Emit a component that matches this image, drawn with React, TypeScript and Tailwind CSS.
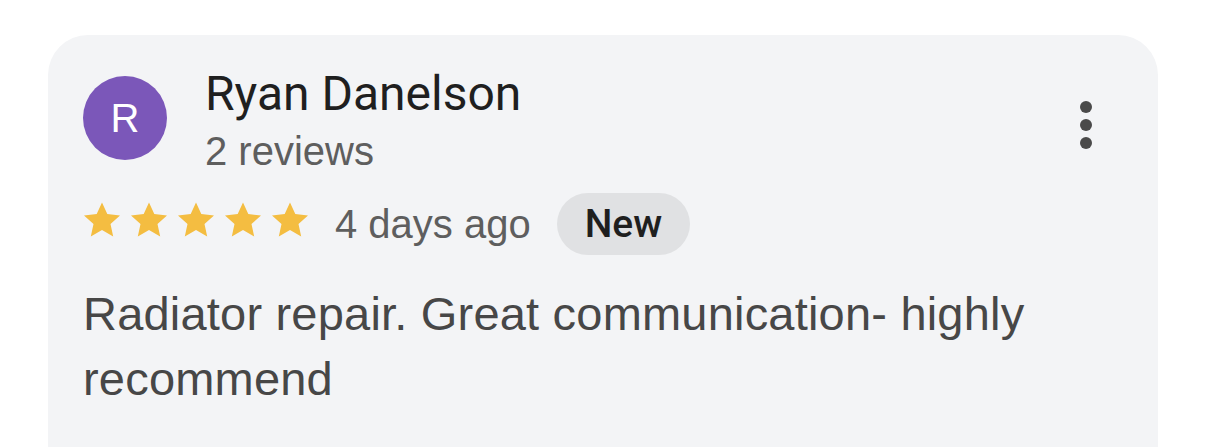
import React from "react";

const Star = () => (
  <svg width="38" height="36" viewBox="0 0 38 36" className="shrink-0">
    <path d="M19 0.5l5.3 11.6 12.7 1.3-9.5 8.6 2.7 12.5L19 28.1 7.8 34.5l2.7-12.5L1 13.4l12.7-1.3z" fill="#f4bd41" />
  </svg>
);

export default function App() {
  return (
    <div className="w-[1206px] h-[447px] bg-white overflow-hidden" style={{ fontFamily: "'Liberation Sans', Arial, sans-serif" }}>
      <div className="ml-[48px] mt-[35px] w-[1110px] h-[500px] rounded-[40px] bg-[#f3f4f6] pl-[35px] pr-[66px] pt-[41px]">
        <div className="flex items-start">
          <div className="w-[84px] h-[84px] rounded-full bg-[#7b57b9] flex items-center justify-center text-white text-[40px] leading-none shrink-0">
            R
          </div>
          <div className="ml-[38px] flex flex-col -mt-[10px]">
            <div className="text-[48px] leading-[56px] text-[#1f1f1f] font-[Roboto]">Ryan Danelson</div>
            <div className="text-[40px] leading-[48px] text-[#5e5e5e] mt-[5px]">2 reviews</div>
          </div>
          <div className="ml-auto mt-[25px] flex flex-col gap-[6px]">
            <div className="w-[12px] h-[12px] rounded-full bg-[#4a4a4a]" />
            <div className="w-[12px] h-[12px] rounded-full bg-[#4a4a4a]" />
            <div className="w-[12px] h-[12px] rounded-full bg-[#4a4a4a]" />
          </div>
        </div>
        <div className="flex items-center h-[62px] mt-[18px]">
          <div className="flex gap-[9px] mb-[8px]">
            <Star /><Star /><Star /><Star /><Star />
          </div>
          <div className="ml-[26px] text-[40px] leading-[48px] text-[#5e5e5e]">4 days ago</div>
          <div className="ml-[26px] h-[62px] px-[28px] rounded-full bg-[#e0e1e3] flex items-center text-[39px] leading-none font-medium text-[#1f1f1f] font-[Roboto]">
            New
          </div>
        </div>
        <div className="mt-[26px] text-[47px] leading-[65px] tracking-[0.2px] text-[#474747] w-[980px]">
          Radiator repair. Great communication- highly recommend
        </div>
      </div>
    </div>
  );
}
